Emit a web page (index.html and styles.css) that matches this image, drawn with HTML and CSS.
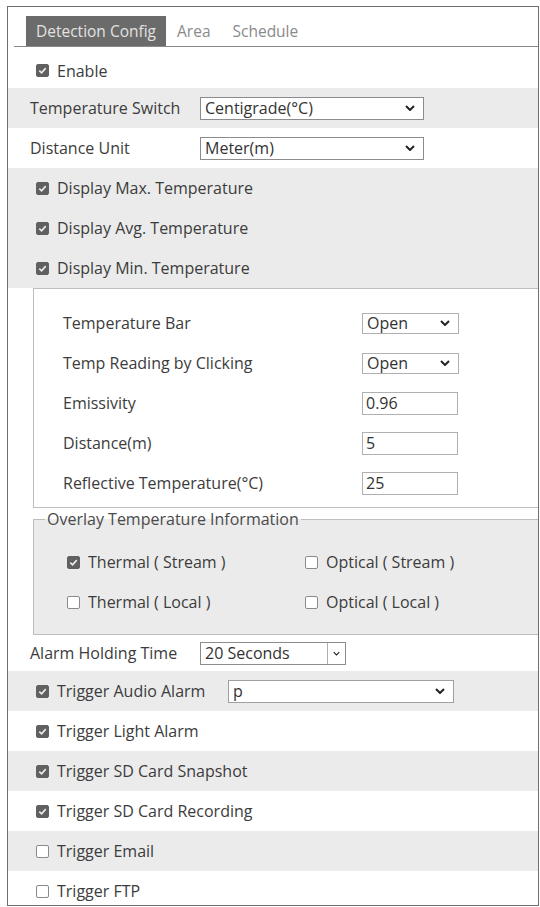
FILE: index.html
```html
<!DOCTYPE html>
<html lang="en">
<head>
  <meta charset="UTF-8">
  <title>Detection Config</title>
  <link rel="stylesheet" href="styles.css">
</head>
<body>
  <div class="panel">
    <div class="tabs">
      <div class="tab active">Detection Config</div>
      <div class="tab">Area</div>
      <div class="tab">Schedule</div>
    </div>

    <div class="row check-row first">
      <span class="cb on"><svg viewBox="0 0 12 12"><polyline points="2.5,6.2 5,8.6 9.5,3.4"/></svg></span>
      <span>Enable</span>
    </div>
    <div class="row grey">
      <span class="label">Temperature Switch</span>
      <div class="select wide"><span>Centigrade(&deg;C)</span><svg class="chev" viewBox="0 0 10 6"><polyline points="1,1 5,5 9,1"/></svg></div>
    </div>
    <div class="row">
      <span class="label">Distance Unit</span>
      <div class="select wide"><span>Meter(m)</span><svg class="chev" viewBox="0 0 10 6"><polyline points="1,1 5,5 9,1"/></svg></div>
    </div>
    <div class="grey">
      <div class="row check-row">
        <span class="cb on"><svg viewBox="0 0 12 12"><polyline points="2.5,6.2 5,8.6 9.5,3.4"/></svg></span>
        <span>Display Max. Temperature</span>
      </div>
      <div class="row check-row">
        <span class="cb on"><svg viewBox="0 0 12 12"><polyline points="2.5,6.2 5,8.6 9.5,3.4"/></svg></span>
        <span>Display Avg. Temperature</span>
      </div>
      <div class="row check-row">
        <span class="cb on"><svg viewBox="0 0 12 12"><polyline points="2.5,6.2 5,8.6 9.5,3.4"/></svg></span>
        <span>Display Min. Temperature</span>
      </div>
    </div>

    <div class="sub-box">
      <div class="sub-row">
        <span class="sub-label">Temperature Bar</span>
        <div class="select small"><span>Open</span><svg class="chev" viewBox="0 0 10 6"><polyline points="1,1 5,5 9,1"/></svg></div>
      </div>
      <div class="sub-row">
        <span class="sub-label">Temp Reading by Clicking</span>
        <div class="select small"><span>Open</span><svg class="chev" viewBox="0 0 10 6"><polyline points="1,1 5,5 9,1"/></svg></div>
      </div>
      <div class="sub-row">
        <span class="sub-label">Emissivity</span>
        <div class="text-input">0.96</div>
      </div>
      <div class="sub-row">
        <span class="sub-label">Distance(m)</span>
        <div class="text-input">5</div>
      </div>
      <div class="sub-row">
        <span class="sub-label">Reflective Temperature(&deg;C)</span>
        <div class="text-input">25</div>
      </div>
    </div>

    <fieldset class="overlay">
      <legend>Overlay Temperature Information</legend>
      <div class="overlay-grid">
        <div class="opt"><span class="cb on"><svg viewBox="0 0 12 12"><polyline points="2.5,6.2 5,8.6 9.5,3.4"/></svg></span>Thermal ( Stream )</div>
        <div class="opt"><span class="cb"></span>Optical ( Stream )</div>
        <div class="opt"><span class="cb"></span>Thermal ( Local )</div>
        <div class="opt"><span class="cb"></span>Optical ( Local )</div>
      </div>
    </fieldset>

    <div class="row hold-row">
      <span class="label">Alarm Holding Time</span>
      <div class="select hold"><span>20 Seconds</span><span class="drop"><svg class="chev tiny" viewBox="0 0 10 6"><polyline points="1,1 5,5 9,1"/></svg></span></div>
    </div>
    <div class="row check-row grey">
      <span class="cb on"><svg viewBox="0 0 12 12"><polyline points="2.5,6.2 5,8.6 9.5,3.4"/></svg></span>
      <span class="audio-label">Trigger Audio Alarm</span>
      <div class="select audio"><span>p</span><svg class="chev" viewBox="0 0 10 6"><polyline points="1,1 5,5 9,1"/></svg></div>
    </div>
    <div class="row check-row">
      <span class="cb on"><svg viewBox="0 0 12 12"><polyline points="2.5,6.2 5,8.6 9.5,3.4"/></svg></span>
      <span>Trigger Light Alarm</span>
    </div>
    <div class="row check-row grey">
      <span class="cb on"><svg viewBox="0 0 12 12"><polyline points="2.5,6.2 5,8.6 9.5,3.4"/></svg></span>
      <span>Trigger SD Card Snapshot</span>
    </div>
    <div class="row check-row">
      <span class="cb on"><svg viewBox="0 0 12 12"><polyline points="2.5,6.2 5,8.6 9.5,3.4"/></svg></span>
      <span>Trigger SD Card Recording</span>
    </div>
    <div class="row check-row grey">
      <span class="cb"></span>
      <span>Trigger Email</span>
    </div>
    <div class="row check-row">
      <span class="cb"></span>
      <span>Trigger FTP</span>
    </div>
  </div>
</body>
</html>
```

FILE: styles.css
```css
* {
    margin: 0;
    padding: 0;
    box-sizing: border-box;
}

body {
    background: #FFFFFF;
    color: #3C3C3C;
    font-family: 'Open Sans', 'Noto Sans', sans-serif;
    font-size: 16px;
}

.panel {
    margin: 6px 0 0 7px;
    width: 532px;
    height: 900px;
    border: 1px solid #6E6E6E;
    padding-top: 9px;
    overflow: hidden;
}

.tabs {
    display: flex;
    align-items: stretch;
    height: 31px;
    margin-left: 6px;
    padding-left: 12px;
    border-bottom: 1px solid #8A8A8A;
}

.tab {
    display: flex;
    align-items: center;
    padding: 0 11px;
    color: #8A8A8A;
    font-size: 15.5px;
}

.tab.active {
    background: #6B6B6B;
    color: #E2E2E2;
    padding: 0 10px;
}

.row {
    height: 40px;
    display: flex;
    align-items: center;
    padding-left: 22px;
}

.row.first {
    height: 41px;
    padding-top: 6px;
}

.grey {
    background: #EBEBEB;
}

.label {
    width: 170px;
}

.check-row {
    padding-left: 28px;
}

.cb {
    width: 13px;
    height: 13px;
    border: 1px solid #8A8A8A;
    border-radius: 2px;
    background: #FFFFFF;
    margin-right: 8px;
    flex-shrink: 0;
    display: flex;
}

.cb.on {
    background: #606060;
    border-color: #606060;
}

.cb svg {
    width: 11px;
    height: 11px;
    fill: none;
    stroke: #EDEDED;
    stroke-width: 1.7;
}

.select {
    display: flex;
    align-items: center;
    justify-content: space-between;
    height: 23px;
    border: 1px solid #8C8C8C;
    background: #FFFFFF;
    padding: 0 8px 0 4px;
    color: #333333;
}

.chev {
    width: 10px;
    height: 6px;
    fill: none;
    stroke: #222222;
    stroke-width: 2;
}

.wide {
    width: 224px;
}

.sub-box {
    margin-left: 25px;
    border: 1px solid #BDBDBD;
    border-right: none;
    background: #FFFFFF;
    padding: 14px 0 4px 29px;
}

.sub-row {
    height: 40px;
    display: flex;
    align-items: center;
}

.sub-label {
    width: 299px;
}

.small {
    width: 97px;
    height: 21px;
    border-color: #B0B0B0;
}

.text-input {
    width: 96px;
    height: 23px;
    border: 1px solid #B0B0B0;
    padding-left: 3px;
    display: flex;
    align-items: center;
    color: #333333;
}

.overlay {
    margin: 0 0 0 25px;
    border: 1px solid #BDBDBD;
    border-right: none;
    background: #EBEBEB;
    padding: 12px 0 12px 33px;
    min-width: 0;
}

.overlay legend {
    padding: 0 2px;
    margin-left: -22px;
    color: #4A4A4A;
}

.overlay-grid {
    display: grid;
    grid-template-columns: 238px 1fr;
    grid-auto-rows: 40px;
    align-items: center;
}

.opt {
    display: flex;
    align-items: center;
}

.hold-row {
    height: 36px;
}

.hold {
    width: 146px;
    padding: 0 0 0 4px;
}

.drop {
    width: 18px;
    height: 100%;
    border-left: 1px solid #B0B0B0;
    display: flex;
    align-items: center;
    justify-content: center;
}

.tiny {
    width: 7px;
    height: 5px;
    stroke-width: 1.6;
}

.audio-label {
    width: 171px;
}

.audio {
    width: 226px;
    height: 23px;
    border-color: #A0A0A0;
}
```
